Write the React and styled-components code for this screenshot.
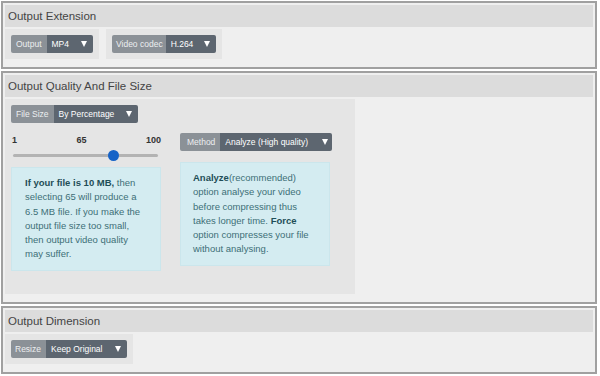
import React from "react";
import styled, { createGlobalStyle } from "styled-components";

const Global = createGlobalStyle`
  html, body { margin: 0; padding: 0; background: #ffffff; }
  body { font-family: "Liberation Sans", Arial, sans-serif; }
  * { box-sizing: border-box; }
`;

const Page = styled.div`
  padding: 1px 3px 0 1px;
  width: 600px;
`;

const Panel = styled.section`
  background: #efefef;
  border: 2px solid #a0a0a0;
  padding: 2px 2px 8px;
  margin-bottom: 2px;
`;

const Header = styled.div`
  background: #dcdcdc;
  height: 22px;
  line-height: 22px;
  padding-left: 3px;
  font-size: 11.5px;
  color: #444;
`;

const Row = styled.div`
  display: flex;
  gap: 7px;
  margin-top: 2px;
  align-items: flex-start;
`;

const Group = styled.div`
  background: #e5e5e5;
  padding: 6px 6px ${(p) => (p.$tall ? "23px" : "6px")};
  display: flex;
  flex-direction: column;
  width: ${(p) => (p.$width ? `${p.$width}px` : "auto")};
`;

const Select = styled.div`
  display: inline-flex;
  align-self: flex-start;
  height: 18px;
  border-radius: 2px;
  overflow: hidden;
  font-size: 8.5px;
  line-height: 18px;
  white-space: nowrap;
`;

const SelLabel = styled.span`
  background: #8b9197;
  color: #eceef0;
  padding: 0 ${(p) => p.$pr || 5}px 0 ${(p) => p.$pl || 5}px;
`;

const SelValue = styled.span`
  background: #5d6670;
  color: #ffffff;
  padding: 0 ${(p) => p.$pr || 6}px 0 5px;
  display: flex;
  align-items: center;
  gap: ${(p) => p.$gap || 12}px;
`;

const Arrow = styled.span`
  width: 0;
  height: 0;
  border-left: 3px solid transparent;
  border-right: 3px solid transparent;
  border-top: 6px solid #ffffff;
`;

const Columns = styled.div`
  display: flex;
  gap: 19px;
  margin-top: 10px;
  align-items: flex-start;
`;

const Column = styled.div`
  width: 150px;
  display: flex;
  flex-direction: column;
`;

const SliderLabels = styled.div`
  display: flex;
  justify-content: space-between;
  height: 14px;
  line-height: 15px;
  font-size: 9px;
  font-weight: bold;
  color: #333;
  padding-left: 1px;
`;

const SliderArea = styled.div`
  height: 16px;
  padding: 6.5px 3px 0 2px;
`;

const Track = styled.div`
  position: relative;
  height: 3px;
  background: #b3b3b3;
  border-radius: 2px;
`;

const Thumb = styled.div`
  position: absolute;
  top: -4px;
  width: 11px;
  height: 11px;
  margin-left: -5.5px;
  border-radius: 50%;
  background: #1663c7;
`;

const Info = styled.div`
  margin-top: ${(p) => p.$mt}px;
  background: #d4ecf1;
  border: 1px solid #cbe6ec;
  padding: 8px 6px 8px ${(p) => p.$pl}px;
  font-size: 9.5px;
  line-height: 14.3px;
  color: #3d6f77;
  white-space: nowrap;
  b { color: #1f4e57; }
`;

function Sel({ label, value, lpl, lpr, vpr, gap }) {
  return (
    <Select>
      <SelLabel $pl={lpl} $pr={lpr}>{label}</SelLabel>
      <SelValue $pr={vpr} $gap={gap}>
        {value}
        <Arrow />
      </SelValue>
    </Select>
  );
}

export default function App() {
  const pct = 69.5;
  return (
    <>
      <Global />
      <Page>
        <Panel>
          <Header>Output Extension</Header>
          <Row>
            <Group>
              <Sel label="Output" value="MP4" />
            </Group>
            <Group>
              <Sel label="Video codec" value="H.264" lpl={4} lpr={3} gap={11} />
            </Group>
          </Row>
        </Panel>

        <Panel>
          <Header>Output Quality And File Size</Header>
          <Row>
            <Group $width={350} $tall>
              <Sel label="File Size" value="By Percentage" />
              <Columns>
                <Column>
                  <SliderLabels>
                    <span>1</span>
                    <span>65</span>
                    <span>100</span>
                  </SliderLabels>
                  <SliderArea>
                    <Track>
                      <Thumb style={{ left: `${pct}%` }} />
                    </Track>
                  </SliderArea>
                  <Info $mt={4} $pl={13}>
                    <b>If your file is 10 MB,</b> then
                    <br />
                    selecting 65 will produce a
                    <br />
                    6.5 MB file. If you make the
                    <br />
                    output file size too small,
                    <br />
                    then output video quality
                    <br />
                    may suffer.
                  </Info>
                </Column>
                <Column>
                  <Sel label="Method" value="Analyze (High quality)" lpl={7} gap={14} vpr={4} />
                  <Info $mt={11} $pl={12}>
                    <b>Analyze</b>(recommended)
                    <br />
                    option analyse your video
                    <br />
                    before compressing thus
                    <br />
                    takes longer time. <b>Force</b>
                    <br />
                    option compresses your file
                    <br />
                    without analysing.
                  </Info>
                </Column>
              </Columns>
            </Group>
          </Row>
        </Panel>

        <Panel>
          <Header>Output Dimension</Header>
          <Row>
            <Group>
              <Sel label="Resize" value="Keep Original" lpl={4} />
            </Group>
          </Row>
        </Panel>
      </Page>
    </>
  );
}
